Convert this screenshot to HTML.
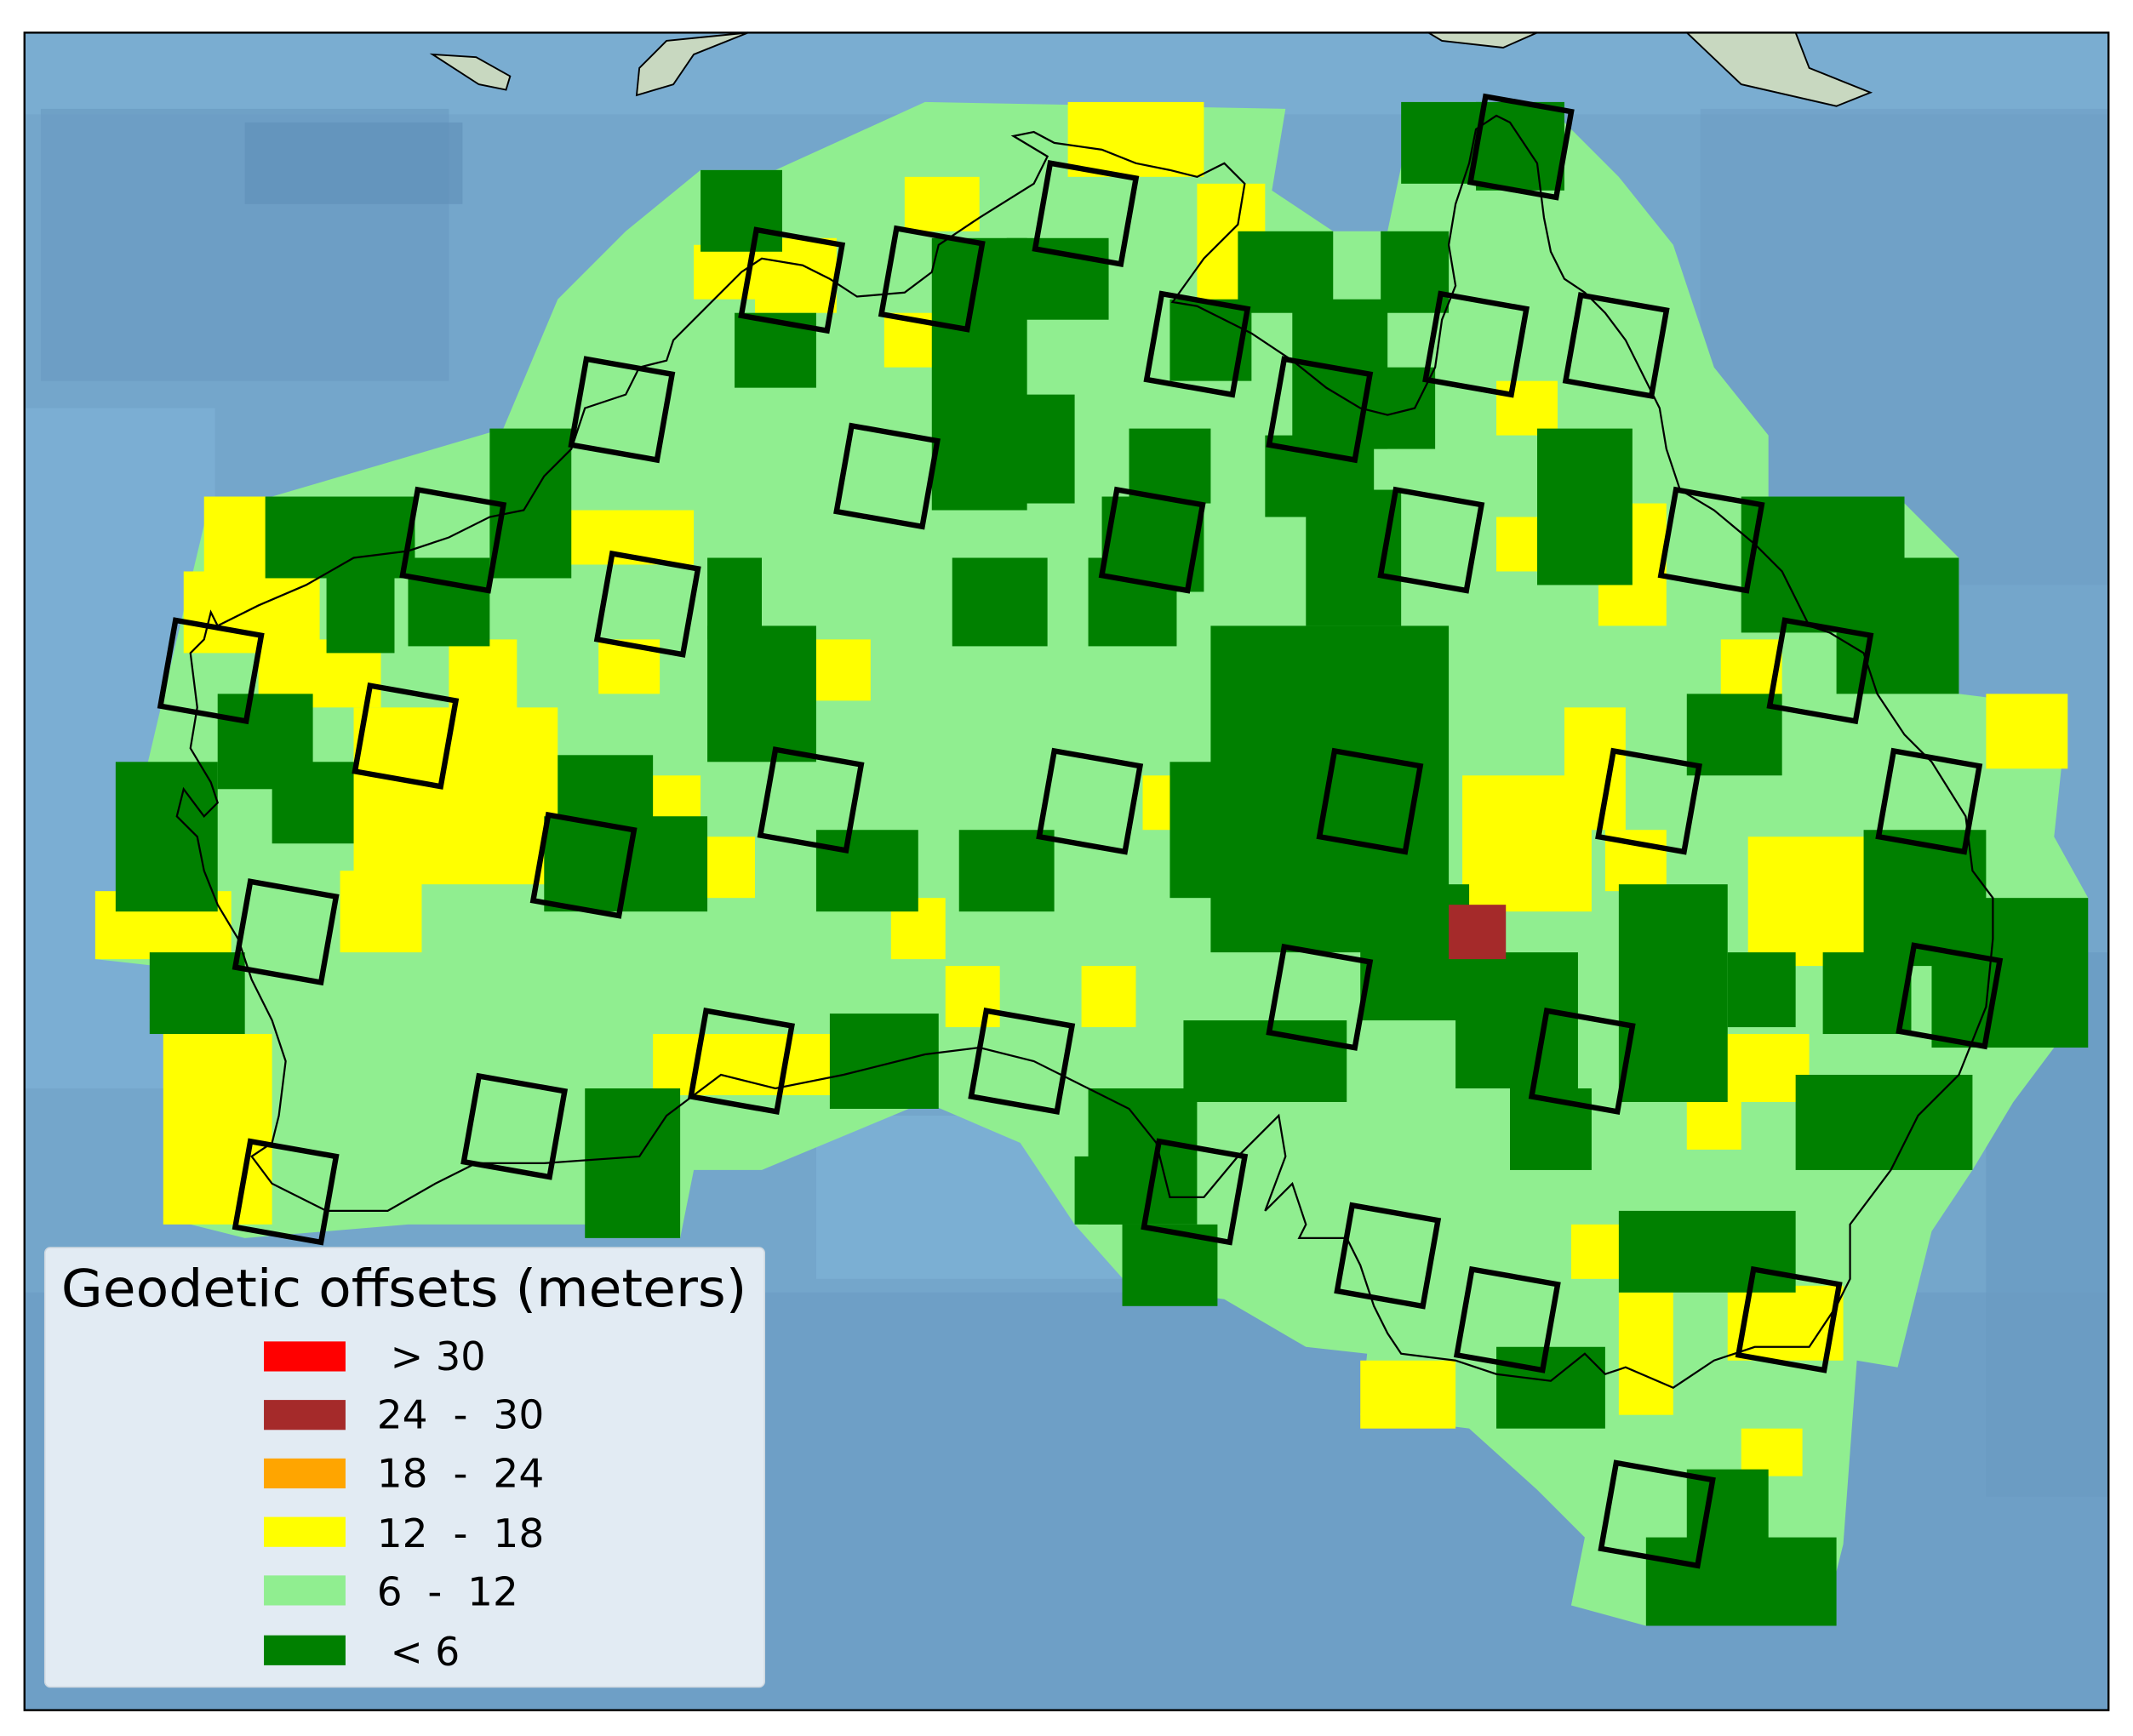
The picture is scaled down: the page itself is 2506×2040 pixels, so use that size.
<!DOCTYPE html>
<html><head><meta charset="utf-8"><style>
html,body{margin:0;padding:0;background:#fff;}
svg{display:block;}
</style></head><body>
<svg width="2506" height="2040" viewBox="0 0 1568 1276" preserveAspectRatio="none" xmlns="http://www.w3.org/2000/svg">
<rect width="1568" height="1276" fill="#fff"/>
<rect x="18" y="24" width="1532" height="1233" fill="#74a6cb"/>
<rect x="18" y="24" width="1532" height="60" fill="#7eb2d6" opacity="0.6"/>
<rect x="30" y="80" width="300" height="200" fill="#6b9bc2" opacity="0.7"/>
<rect x="180" y="90" width="160" height="60" fill="#5f8fb8" opacity="0.6"/>
<rect x="18" y="300" width="140" height="500" fill="#80b4d8" opacity="0.6"/>
<rect x="18" y="950" width="1532" height="307" fill="#6d9ec4" opacity="0.8"/>
<rect x="1250" y="80" width="300" height="350" fill="#6e9fc5" opacity="0.6"/>
<rect x="1460" y="700" width="90" height="400" fill="#6a9bc2" opacity="0.7"/>
<rect x="600" y="820" width="250" height="120" fill="#80b5d9" opacity="0.6"/>
<path d="M318,40 L350,42 L375,56 L372,66 L352,62 Z" fill="#c8d8c0" stroke="#000" stroke-width="1.2"/>
<path d="M470,50 L490,30 L550,24 L510,40 L495,62 L468,70 Z" fill="#c8d8c0" stroke="#000" stroke-width="1.2"/>
<path d="M1050,24 L1130,24 L1105,35 L1060,30 Z" fill="#c8d8c0" stroke="#000" stroke-width="1.2"/>
<path d="M1240,24 L1320,24 L1330,50 L1375,68 L1350,78 L1280,62 Z" fill="#c8d8c0" stroke="#000" stroke-width="1.2"/>
<path fill="#90ee90" d="M70,705 L85,655 L110,555 L130,470 L155,365 L200,365 L370,315 L410,220 L460,170 L515,125 L570,125 L680,75 L945,80 L935,140 L980,170 L1020,170 L1040,75 L1090,75 L1150,90 L1190,130 L1230,180 L1260,270 L1300,320 L1300,365 L1395,365 L1440,410 L1440,510 L1520,520 L1510,615 L1535,660 L1510,770 L1480,810 L1450,860 L1420,905 L1395,1005 L1365,1000 L1355,1135 L1340,1195 L1210,1195 L1155,1180 L1165,1130 L1130,1095 L1080,1050 L1000,1040 L1005,995 L960,990 L900,955 L830,945 L790,900 L750,840 L680,810 L560,860 L510,860 L500,910 L430,900 L380,900 L300,900 L180,910 L120,895 L140,810 L150,760 L110,750 L115,710 Z"/>
<g fill="#ffff00">
<rect x="785" y="75" width="100" height="55"/><rect x="665" y="130" width="55" height="40"/><rect x="880" y="135" width="50" height="90"/>
<rect x="650" y="230" width="45" height="40"/><rect x="510" y="180" width="80" height="40"/><rect x="555" y="175" width="60" height="55"/>
<rect x="150" y="365" width="50" height="100"/><rect x="135" y="420" width="100" height="60"/><rect x="190" y="470" width="90" height="50"/>
<rect x="330" y="470" width="50" height="60"/><rect x="260" y="520" width="150" height="130"/><rect x="250" y="640" width="60" height="60"/>
<rect x="70" y="655" width="100" height="50"/><rect x="120" y="760" width="80" height="140"/>
<rect x="410" y="375" width="100" height="40"/><rect x="440" y="470" width="45" height="40"/><rect x="600" y="470" width="40" height="45"/>
<rect x="470" y="570" width="45" height="40"/><rect x="510" y="615" width="45" height="45"/><rect x="655" y="660" width="40" height="45"/>
<rect x="695" y="710" width="40" height="45"/><rect x="795" y="710" width="40" height="45"/><rect x="480" y="760" width="140" height="45"/>
<rect x="840" y="570" width="35" height="40"/><rect x="1075" y="570" width="95" height="100"/><rect x="1150" y="520" width="45" height="90"/>
<rect x="1180" y="610" width="45" height="45"/><rect x="1100" y="380" width="40" height="40"/><rect x="1100" y="280" width="45" height="40"/>
<rect x="1175" y="370" width="50" height="90"/><rect x="1265" y="470" width="45" height="45"/><rect x="1285" y="615" width="90" height="95"/>
<rect x="1250" y="760" width="80" height="50"/><rect x="1240" y="790" width="40" height="55"/><rect x="1460" y="510" width="60" height="55"/>
<rect x="1155" y="900" width="40" height="40"/><rect x="1190" y="950" width="40" height="90"/><rect x="1270" y="945" width="85" height="55"/>
<rect x="1000" y="1000" width="70" height="50"/><rect x="1280" y="1050" width="45" height="35"/>
</g>
<g fill="#008000">
<rect x="515" y="125" width="60" height="60"/><rect x="540" y="230" width="60" height="55"/>
<rect x="685" y="175" width="70" height="200"/><rect x="740" y="175" width="75" height="60"/><rect x="745" y="290" width="45" height="80"/>
<rect x="1030" y="75" width="60" height="60"/><rect x="1085" y="75" width="65" height="65"/><rect x="1015" y="170" width="50" height="60"/>
<rect x="910" y="170" width="70" height="60"/><rect x="860" y="220" width="60" height="60"/><rect x="950" y="220" width="70" height="110"/>
<rect x="1010" y="270" width="45" height="60"/><rect x="930" y="320" width="80" height="60"/><rect x="830" y="315" width="60" height="55"/>
<rect x="810" y="365" width="75" height="70"/><rect x="800" y="410" width="65" height="65"/><rect x="700" y="410" width="70" height="65"/>
<rect x="1130" y="315" width="70" height="115"/><rect x="960" y="360" width="70" height="100"/><rect x="890" y="460" width="175" height="240"/>
<rect x="860" y="560" width="60" height="100"/><rect x="1000" y="650" width="80" height="100"/><rect x="1070" y="700" width="90" height="100"/>
<rect x="1110" y="800" width="60" height="60"/><rect x="1190" y="650" width="80" height="160"/><rect x="1270" y="700" width="50" height="55"/>
<rect x="1240" y="510" width="70" height="60"/><rect x="1280" y="365" width="120" height="100"/><rect x="1350" y="410" width="90" height="100"/>
<rect x="1370" y="610" width="90" height="100"/><rect x="1420" y="660" width="115" height="110"/><rect x="1340" y="700" width="65" height="60"/>
<rect x="1320" y="790" width="130" height="70"/><rect x="1190" y="890" width="130" height="60"/><rect x="1100" y="990" width="80" height="60"/>
<rect x="1240" y="1080" width="60" height="60"/><rect x="1210" y="1130" width="140" height="65"/><rect x="870" y="750" width="120" height="60"/>
<rect x="800" y="800" width="80" height="100"/><rect x="790" y="850" width="50" height="50"/><rect x="825" y="900" width="70" height="60"/>
<rect x="430" y="800" width="70" height="110"/><rect x="610" y="745" width="80" height="70"/><rect x="600" y="610" width="75" height="60"/>
<rect x="705" y="610" width="70" height="60"/><rect x="520" y="460" width="80" height="100"/><rect x="520" y="410" width="40" height="60"/>
<rect x="410" y="555" width="70" height="60"/><rect x="400" y="600" width="120" height="70"/><rect x="360" y="315" width="60" height="110"/>
<rect x="300" y="410" width="60" height="65"/><rect x="195" y="365" width="110" height="60"/><rect x="240" y="420" width="50" height="60"/>
<rect x="160" y="510" width="70" height="70"/><rect x="200" y="560" width="60" height="60"/><rect x="85" y="560" width="75" height="110"/>
<rect x="110" y="700" width="70" height="60"/>
</g>
<rect x="1065" y="665" width="42" height="40" fill="#a52a2a"/>
<path fill="none" stroke="#000" stroke-width="1.4" d="M545,200 L520,225 L495,250 L490,265 L470,270 L460,290 L430,300 L420,330 L400,350 L385,375 L360,380 L330,395 L300,405 L260,410 L225,430 L190,445 L160,460 L155,450 L150,470 L140,480 L145,520 L140,550 L155,575 L160,590 L150,600 L135,580 L130,600 L145,615 L150,640 L160,665 L175,690 L185,720 L200,750 L210,780 L205,820 L200,840 L185,850 L200,870 L240,890 L285,890 L320,870 L350,855 L400,855 L470,850 L490,820 L530,790 L570,800 L620,790 L680,775 L720,770 L760,780 L800,800 L830,815 L850,840 L860,880 L885,880 L910,850 L940,820 L945,850 L930,890 L950,870 L960,900 L955,910 L990,910 L1000,930 L1010,960 L1020,980 L1030,995 L1070,1000 L1100,1010 L1140,1015 L1165,995 L1180,1010 L1195,1005 L1230,1020 L1260,1000 L1290,990 L1330,990 L1350,960 L1360,940 L1360,900 L1390,860 L1410,820 L1440,790 L1460,740 L1465,690 L1465,660 L1450,640 L1445,600 L1420,560 L1400,540 L1380,510 L1370,480 L1345,465 L1330,460 L1310,420 L1290,400 L1260,375 L1235,360 L1225,330 L1220,300 L1210,280 L1195,250 L1180,230 L1165,215 L1150,205 L1140,185 L1135,160 L1130,120 L1110,90 L1100,85 L1085,95 L1080,120 L1070,150 L1065,180 L1070,210 L1060,235 L1055,270 L1040,300 L1020,305 L1000,300 L975,285 L950,265 L920,245 L880,225 L862,222 L885,190 L910,165 L915,135 L900,120 L880,130 L860,125 L835,120 L810,110 L775,105 L760,97 L745,100 L770,115 L760,135 L720,160 L705,170 L690,180 L685,200 L665,215 L630,218 L610,205 L590,195 L560,190 Z"/>
<g fill="none" stroke="#000" stroke-width="4">
<g transform="translate(582,206) rotate(10)"><rect x="-32" y="-32" width="64" height="64"/></g>
<g transform="translate(685,205) rotate(10)"><rect x="-32" y="-32" width="64" height="64"/></g>
<g transform="translate(798,157) rotate(10)"><rect x="-32" y="-32" width="64" height="64"/></g>
<g transform="translate(1118,108) rotate(10)"><rect x="-32" y="-32" width="64" height="64"/></g>
<g transform="translate(880,253) rotate(10)"><rect x="-32" y="-32" width="64" height="64"/></g>
<g transform="translate(970,301) rotate(10)"><rect x="-32" y="-32" width="64" height="64"/></g>
<g transform="translate(1085,253) rotate(10)"><rect x="-32" y="-32" width="64" height="64"/></g>
<g transform="translate(1188,254) rotate(10)"><rect x="-32" y="-32" width="64" height="64"/></g>
<g transform="translate(457,301) rotate(10)"><rect x="-32" y="-32" width="64" height="64"/></g>
<g transform="translate(652,350) rotate(10)"><rect x="-32" y="-32" width="64" height="64"/></g>
<g transform="translate(847,397) rotate(10)"><rect x="-32" y="-32" width="64" height="64"/></g>
<g transform="translate(1052,397) rotate(10)"><rect x="-32" y="-32" width="64" height="64"/></g>
<g transform="translate(1258,397) rotate(10)"><rect x="-32" y="-32" width="64" height="64"/></g>
<g transform="translate(333,397) rotate(10)"><rect x="-32" y="-32" width="64" height="64"/></g>
<g transform="translate(476,444) rotate(10)"><rect x="-32" y="-32" width="64" height="64"/></g>
<g transform="translate(155,493) rotate(10)"><rect x="-32" y="-32" width="64" height="64"/></g>
<g transform="translate(298,541) rotate(10)"><rect x="-32" y="-32" width="64" height="64"/></g>
<g transform="translate(1338,493) rotate(10)"><rect x="-32" y="-32" width="64" height="64"/></g>
<g transform="translate(596,588) rotate(10)"><rect x="-32" y="-32" width="64" height="64"/></g>
<g transform="translate(801,589) rotate(10)"><rect x="-32" y="-32" width="64" height="64"/></g>
<g transform="translate(1007,589) rotate(10)"><rect x="-32" y="-32" width="64" height="64"/></g>
<g transform="translate(1212,589) rotate(10)"><rect x="-32" y="-32" width="64" height="64"/></g>
<g transform="translate(1418,589) rotate(10)"><rect x="-32" y="-32" width="64" height="64"/></g>
<g transform="translate(429,636) rotate(10)"><rect x="-32" y="-32" width="64" height="64"/></g>
<g transform="translate(210,685) rotate(10)"><rect x="-32" y="-32" width="64" height="64"/></g>
<g transform="translate(970,733) rotate(10)"><rect x="-32" y="-32" width="64" height="64"/></g>
<g transform="translate(1433,732) rotate(10)"><rect x="-32" y="-32" width="64" height="64"/></g>
<g transform="translate(545,780) rotate(10)"><rect x="-32" y="-32" width="64" height="64"/></g>
<g transform="translate(751,780) rotate(10)"><rect x="-32" y="-32" width="64" height="64"/></g>
<g transform="translate(1163,780) rotate(10)"><rect x="-32" y="-32" width="64" height="64"/></g>
<g transform="translate(378,828) rotate(10)"><rect x="-32" y="-32" width="64" height="64"/></g>
<g transform="translate(878,876) rotate(10)"><rect x="-32" y="-32" width="64" height="64"/></g>
<g transform="translate(210,876) rotate(10)"><rect x="-32" y="-32" width="64" height="64"/></g>
<g transform="translate(1020,923) rotate(10)"><rect x="-32" y="-32" width="64" height="64"/></g>
<g transform="translate(1108,970) rotate(10)"><rect x="-32" y="-32" width="64" height="64"/></g>
<g transform="translate(1315,970) rotate(10)"><rect x="-32" y="-32" width="64" height="64"/></g>
<g transform="translate(1218,1113) rotate(10)"><rect x="-36" y="-32" width="72" height="64"/></g>
</g>
<rect x="33" y="917" width="529" height="323" rx="4" fill="#e2ebf3" stroke="#cfd8e0" stroke-width="1"/>
<g font-family="'DejaVu Sans','Liberation Sans',sans-serif" fill="#000" style="white-space:pre">
<text x="45" y="960" font-size="38" textLength="504" lengthAdjust="spacingAndGlyphs">Geodetic offsets (meters)</text>
<g font-size="29">
<text x="287" y="1007" textLength="70" lengthAdjust="spacingAndGlyphs">&gt; 30</text>
<text x="277" y="1050" textLength="123" lengthAdjust="spacingAndGlyphs" xml:space="preserve">24  -  30</text>
<text x="277" y="1093" textLength="123" lengthAdjust="spacingAndGlyphs" xml:space="preserve">18  -  24</text>
<text x="277" y="1137" textLength="123" lengthAdjust="spacingAndGlyphs" xml:space="preserve">12  -  18</text>
<text x="277" y="1180" textLength="104" lengthAdjust="spacingAndGlyphs" xml:space="preserve">6  -  12</text>
<text x="287" y="1224" textLength="51" lengthAdjust="spacingAndGlyphs">&lt; 6</text>
</g>
</g>
<rect x="194" y="986" width="60" height="22" fill="#ff0000"/>
<rect x="194" y="1029" width="60" height="22" fill="#a52a2a"/>
<rect x="194" y="1072" width="60" height="22" fill="#ffa500"/>
<rect x="194" y="1115" width="60" height="22" fill="#ffff00"/>
<rect x="194" y="1158" width="60" height="22" fill="#90ee90"/>
<rect x="194" y="1202" width="60" height="22" fill="#008000"/>
<rect x="18" y="24" width="1532" height="1233" fill="none" stroke="#000" stroke-width="1.5"/>
</svg>
</body></html>
